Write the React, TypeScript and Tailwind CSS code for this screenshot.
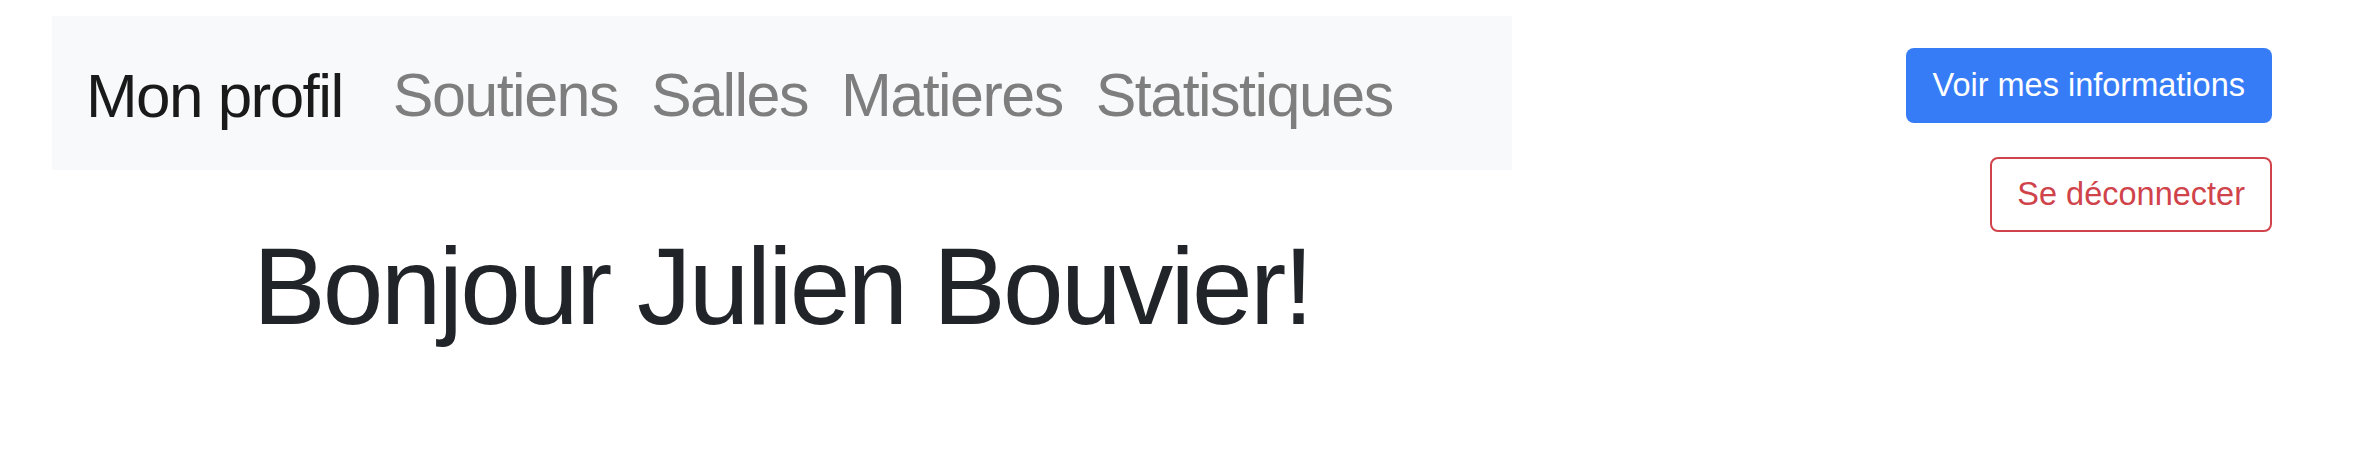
export default function App() {
  const links = ["Soutiens", "Salles", "Matieres", "Statistiques"];

  return (
    <div className="min-h-[468px] bg-white font-['Liberation_Sans',Arial,sans-serif]">
      <div className="flex pt-[16px] pl-[52px] pr-[96px]">
        <div className="w-[1460px]">
          <nav className="h-[154px] bg-[#f8f9fa] flex items-center px-[34px] pt-[5px]">
            <a href="#" className="text-[#1a1a1a] text-[62px] tracking-[-0.025em] mr-[50px]">
              Mon profil
            </a>
            <div className="flex gap-[33px] text-[61px] tracking-[-0.025em]">
              {links.map((l) => (
                <a key={l} href="#" className="text-[#7e7e7f]">
                  {l}
                </a>
              ))}
            </div>
          </nav>
          <h1 className="mt-[51px] text-center text-[109px] leading-[1.2] tracking-[-0.025em] text-[#212529]">
            Bonjour Julien Bouvier!
          </h1>
        </div>
        <div className="ml-auto flex flex-col items-end gap-[34px] pt-[32px]">
          <button className="h-[75px] px-[27px] rounded-[8px] bg-[#377cf7] text-white text-[32.5px]">
            Voir mes informations
          </button>
          <button className="h-[75px] px-[25px] rounded-[8px] border-2 border-[#d0434b] text-[#d0434b] text-[32.5px] bg-white">
            Se déconnecter
          </button>
        </div>
      </div>
    </div>
  );
}
